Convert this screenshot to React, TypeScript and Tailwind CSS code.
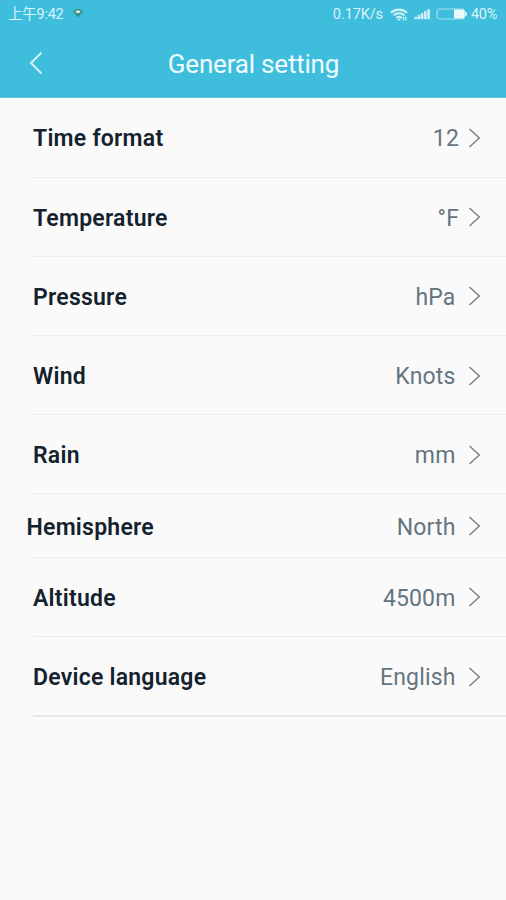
import clsx from 'clsx'

interface Setting {
  label: string
  value: string
  tight?: boolean
  compact?: boolean
  last?: boolean
}

const settings: Setting[] = [
  { label: 'Time format', value: '12', tight: true },
  { label: 'Temperature', value: '°F', tight: true },
  { label: 'Pressure', value: 'hPa' },
  { label: 'Wind', value: 'Knots' },
  { label: 'Rain', value: 'mm' },
  { label: 'Hemisphere', value: 'North', compact: true },
  { label: 'Altitude', value: '4500m' },
  { label: 'Device language', value: 'English', last: true },
]

function WifiIcon() {
  return (
    <svg viewBox="0 0 18 13" className="w-[18px] h-[13px]" fill="none" stroke="#d3f1f8" strokeWidth="2.1">
      <path d="M1 4.8C5.6 0.6 12.4 0.6 17 4.8" />
      <path d="M3.6 7.5C6.8 4.7 11.2 4.7 14.4 7.5" />
      <path d="M6.2 10C7.9 8.5 10.1 8.5 11.8 10" />
      <path d="M9 13L7.2 11Q9 9.8 10.8 11Z" fill="#d3f1f8" stroke="none" />
      <path d="M13.6 8.8V12.4M15.8 8.8V12.4" strokeWidth="1.3" />
    </svg>
  )
}

function SignalIcon() {
  return (
    <svg viewBox="0 0 17 12" className="w-4 h-3" fill="#d3f1f8">
      <rect x="0.5" y="9" width="2.7" height="2.5" />
      <rect x="3.9" y="7.2" width="2.7" height="4.3" />
      <rect x="7.3" y="5.2" width="2.7" height="6.3" />
      <rect x="10.7" y="3" width="2.7" height="8.5" />
      <rect x="14.1" y="0.8" width="2.7" height="10.7" />
    </svg>
  )
}

function BatteryIcon() {
  return (
    <svg viewBox="0 0 32 12" className="w-8 h-3">
      <rect x="1" y="1" width="27.5" height="10" rx="3" fill="none" stroke="#a3e0ee" strokeWidth="1.2" />
      <path d="M18 1.5H26.5Q28.5 1.5 28.5 3.5V8.5Q28.5 10.5 26.5 10.5H18Z" fill="#e9fafd" />
      <path d="M29 3.5Q31.2 3.8 31.2 6T29 8.5Z" fill="#d3f1f8" />
    </svg>
  )
}

function StatusBar() {
  return (
    <div className="h-7 flex items-center pl-[8px] pr-[8px] text-[#d9f4fa] text-[14.5px] leading-none whitespace-nowrap">
      <span className="w-[56px] pt-[2px] font-['Roboto','Noto_Sans_CJK_SC',sans-serif] tracking-[-0.25px]">上午9:42</span>
      <svg viewBox="0 0 12 10" className="w-3 h-2.5 ml-[8px] -mt-[2px]">
        <path d="M0.8 3.2Q6 -1 11.2 3.2L6 9.5Z" fill="#348f85" />
        <path d="M3 3.4Q6 1.5 9 3.4L6 5.6Z" fill="#e5f1d8" />
      </svg>
      <div className="ml-auto flex items-center">
        <span className="mr-[7px] pt-[2px] tracking-[-0.1px]">0.17K/s</span>
        <WifiIcon />
        <div className="ml-[6px] mr-[6px]"><SignalIcon /></div>
        <BatteryIcon />
        <span className="ml-[3px] pt-[2px] w-[27px] tracking-[-0.3px]">40%</span>
      </div>
    </div>
  )
}

function Row({ label, value, tight, compact, last }: Setting) {
  return (
    <div className={clsx('relative flex items-center', compact ? 'h-[63.4px] pl-[26.5px]' : 'h-[79.2px] pl-[33px]')}>
      <span className="flex-1 pt-[3px] text-[23px] leading-7 tracking-[0.24px] font-semibold text-[#14222d]">{label}</span>
      <span className={clsx('pt-[3px] text-[23px] leading-7 tracking-[0.15px] text-[#65757f]', tight ? 'mr-[9px]' : 'mr-[12.5px]')}>{value}</span>
      <svg viewBox="0 0 13 20" className="w-[13px] h-5 mr-[25px]" fill="none" stroke="#7c8185" strokeWidth="1.5">
        <path d="M1.5 1L11.3 10L1.5 19" />
      </svg>
      <div className={clsx('absolute left-[33px] right-0', last ? '-bottom-px h-[2px] bg-[#e6e8e9]' : 'bottom-0 h-px bg-[#ededee]')} />
    </div>
  )
}

export default function App() {
  return (
    <div className="w-full h-screen overflow-hidden bg-[#fafafb] font-['Roboto',sans-serif]">
      <header className="h-[98px] bg-[#3fbddd] border-b border-[#5cc5df]">
        <StatusBar />
        <div className="h-[70px] grid grid-cols-[80px_1fr_80px] items-center">
          <svg viewBox="0 0 14 24" className="w-3.5 h-6 ml-[29px] -mt-[1px]" fill="none" stroke="#d9f6fb" strokeWidth="1.8">
            <path d="M12.5 1.5L2 12L12.5 22.5" />
          </svg>
          <h1 className="pt-[2px] pl-[1px] text-center text-[26px] leading-8 tracking-[-0.2px] text-[#effcff]">General setting</h1>
        </div>
      </header>
      <main className="pt-[0.4px]">
        {settings.map((item) => (
          <Row key={item.label} {...item} />
        ))}
      </main>
    </div>
  )
}
